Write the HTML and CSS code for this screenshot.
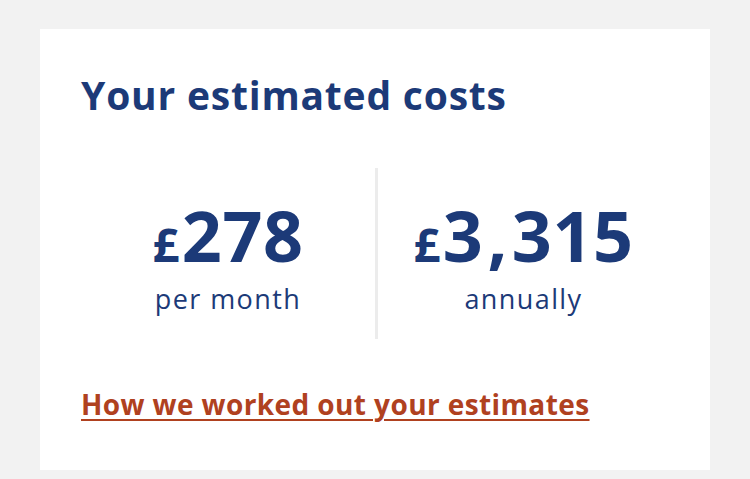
FILE: index.html
```html
<!DOCTYPE html>
<html lang="en-gb">
<head>
    <meta charset="UTF-8">
    <meta name="viewport" content="width=device-width, initial-scale=1.0">
    <title>Your estimated costs</title>
    <link rel="stylesheet" href="styles.css">
</head>
<body>
    <div class="card">
        <h2>Your estimated costs</h2>
        <div class="costs">
            <div class="cost">
                <p class="amount"><span class="currency">£</span>278</p>
                <p class="period">per month</p>
            </div>
            <div class="cost">
                <p class="amount"><span class="currency">£</span>3<span class="comma">,</span>315</p>
                <p class="period">annually</p>
            </div>
        </div>
        <a href="#" class="estimate-link">How we worked out your estimates</a>
    </div>
</body>
</html>
```

FILE: styles.css
```css
:root {
    --navy: #1c3a78;
    --link-color: #b0411f;
    --background-color: #f2f2f2;
    --divider-color: #ececec;
}
body {
    font-family: 'Open Sans', 'Noto Sans', Arial, sans-serif;
    background-color: var(--background-color);
    margin: 0;
    padding: 29px 40px 10px;
}
.card {
    background-color: #ffffff;
    padding: 44px 41px 49px;
}
h2 {
    margin: 0;
    color: var(--navy);
    font-size: 39px;
    line-height: 43px;
    font-weight: 700;
    letter-spacing: 0.8px;
}
.costs {
    display: grid;
    grid-template-columns: 1fr 1fr;
    margin-top: 52px;
}
.cost {
    text-align: center;
    padding: 32px 0 24px;
    color: var(--navy);
}
.cost + .cost {
    border-left: 3px solid var(--divider-color);
}
.amount {
    margin: 0;
    font-size: 70px;
    line-height: 70px;
    font-weight: 700;
    letter-spacing: 0.5px;
}
.currency {
    font-size: 0.67em;
    margin-right: 2px;
}
.comma {
    margin: 0 4px;
}
.period {
    margin: 4px 0 0;
    font-size: 27px;
    line-height: 32px;
    letter-spacing: 1.4px;
}
.estimate-link {
    display: inline-block;
    margin-top: 48px;
    color: var(--link-color);
    font-size: 28px;
    line-height: 34px;
    font-weight: 700;
    letter-spacing: 0.4px;
    text-decoration-thickness: 2px;
    text-underline-offset: 4px;
}
```
